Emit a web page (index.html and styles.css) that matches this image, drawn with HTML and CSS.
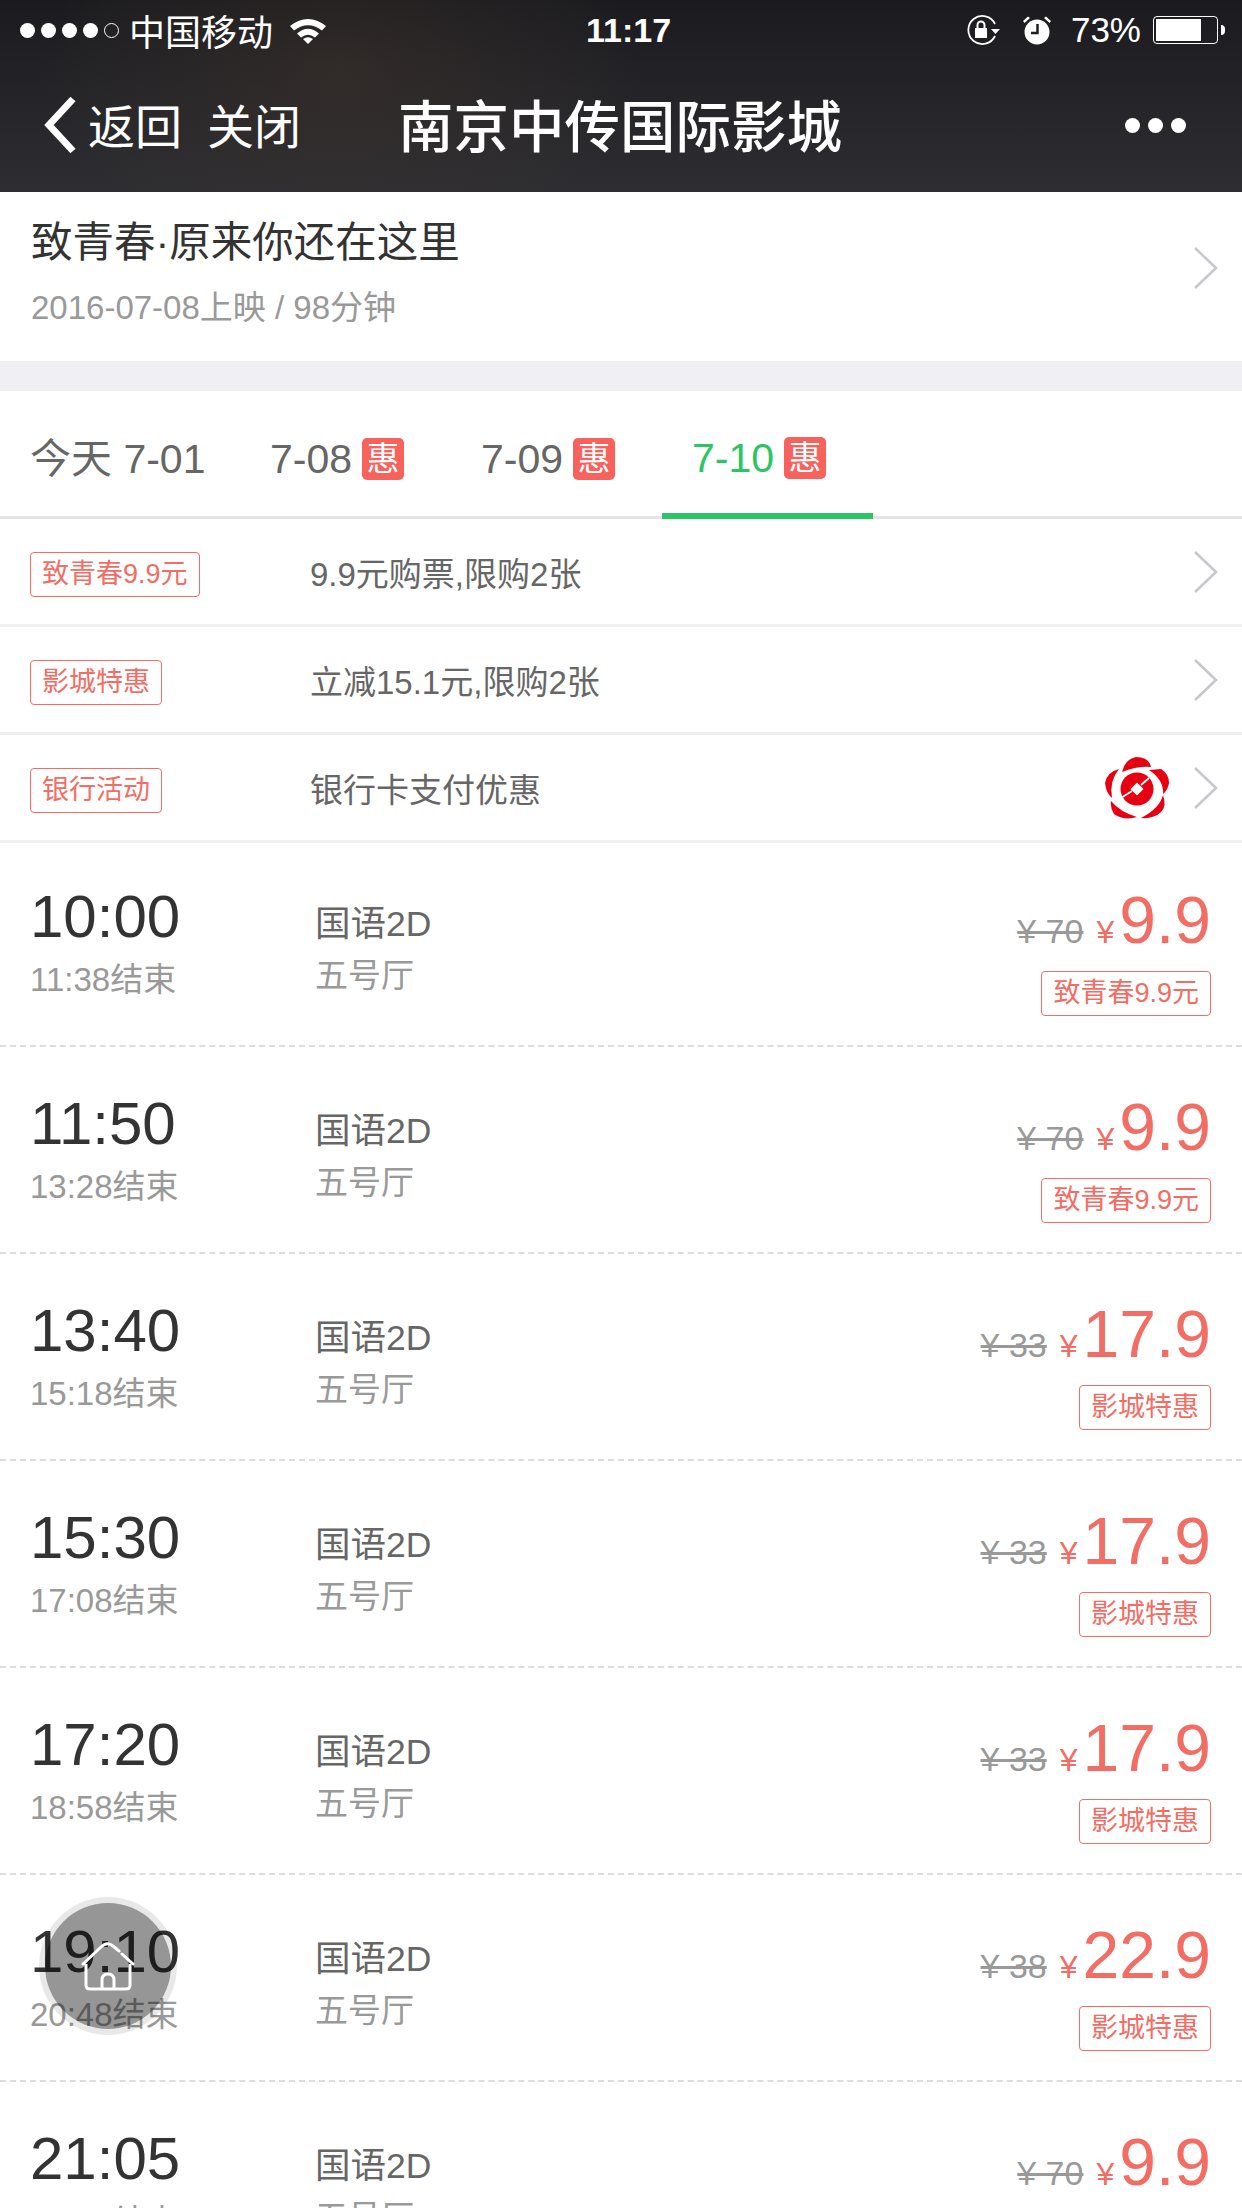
FILE: index.html
```html
<!DOCTYPE html>
<html lang="zh-CN">
<head>
    <meta charset="UTF-8">
    <title>南京中传国际影城</title>
    <link rel="stylesheet" href="styles.css">
</head>
<body>
    <div class="page">
        <header class="top">
            <div class="status">
                <div class="status-left">
                    <span class="dot"></span><span class="dot"></span><span class="dot"></span><span class="dot"></span><span class="dot dot-empty"></span>
                    <span class="carrier">中国移动</span>
                    <svg class="wifi" width="38" height="27" viewBox="0 0 38 27">
                        <path d="M1 9 Q19 -5 37 9 L33 13.500 Q19 3 5 13.500 Z" fill="#fff"/>
                        <path d="M8 16.500 Q19 7 30 16.500 L26 20.500 Q19 15 12 20.500 Z" fill="#fff"/>
                        <path d="M14 22 Q19 18.500 24 22 L19 27 Z" fill="#fff"/>
                    </svg>
                </div>
                <div class="clock">11:17</div>
                <div class="status-right">
                    <svg class="lock" width="36" height="32" viewBox="0 0 36 32">
                        <path d="M29 22 A14 14 0 1 1 29 10" fill="none" stroke="#fff" stroke-width="1.800"/>
                        <path d="M25 15 H34 L29.500 20 Z" fill="#fff"/>
                        <rect x="9" y="14" width="12" height="10" fill="#fff"/>
                        <path d="M11.500 14 V11 A3.500 3.500 0 0 1 18.500 11 V14" fill="none" stroke="#fff" stroke-width="2"/>
                    </svg>
                    <svg class="alarm" width="30" height="30" viewBox="0 0 30 30">
                        <circle cx="15" cy="17" r="12.500" fill="#fff"/>
                        <path d="M1 6 L6 1.500 L8 3 L2.500 8 Z M29 6 L24 1.500 L22 3 L27.500 8 Z" fill="#fff"/>
                        <path d="M15.500 9 V18 H9" fill="none" stroke="#1e1d21" stroke-width="2.500"/>
                    </svg>
                    <span class="percent">73%</span>
                    <div class="battery"><div class="battery-fill"></div></div>
                    <div class="battery-nub"></div>
                </div>
            </div>
            <nav class="nav">
                <svg class="back" width="36" height="60" viewBox="0 0 36 60">
                    <path d="M31 4 L7 30 L31 56" fill="none" stroke="#fff" stroke-width="7"/>
                </svg>
                <span class="nav-link">返回</span>
                <span class="nav-link nav-close">关闭</span>
                <h1 class="nav-title">南京中传国际影城</h1>
                <div class="more"><span></span><span></span><span></span></div>
            </nav>
        </header>

        <section class="movie">
            <div class="movie-text">
                <div class="movie-name">致青春·原来你还在这里</div>
                <div class="movie-sub">2016-07-08上映 / 98分钟</div>
            </div>
            <svg class="chevron movie-chevron" width="25" height="44" viewBox="0 0 25 44"><path d="M2 2 L23 22 L2 42"/></svg>
        </section>
        <div class="gap"></div>

        <div class="tabs">
            <div class="tab">今天 7-01</div>
            <div class="tab">7-08<span class="hui">惠</span></div>
            <div class="tab">7-09<span class="hui">惠</span></div>
            <div class="tab tab-active">7-10<span class="hui">惠</span></div>
        </div>

        <section class="promos">
            <div class="promo">
                <div class="promo-tag"><span class="tag">致青春9.9元</span></div>
                <div class="promo-text">9.9元购票,限购2张</div>
                <svg class="chevron" width="25" height="44" viewBox="0 0 25 44"><path d="M2 2 L23 22 L2 42"/></svg>
            </div>
            <div class="promo">
                <div class="promo-tag"><span class="tag">影城特惠</span></div>
                <div class="promo-text">立减15.1元,限购2张</div>
                <svg class="chevron" width="25" height="44" viewBox="0 0 25 44"><path d="M2 2 L23 22 L2 42"/></svg>
            </div>
            <div class="promo">
                <div class="promo-tag"><span class="tag">银行活动</span></div>
                <div class="promo-text">银行卡支付优惠</div>
                <svg class="bank" width="66" height="63" viewBox="0 0 66 63">
                    <path d="M18 16 Q21 3 32 1 Q45 1 47 11 Q33 10 18 16 Z" fill="#e60012"/>
                    <path d="M45 14 L57 13 Q65 18 65 27 Q64 34 59 38 Q60 24 45 14 Z" fill="#e60012"/>
                    <path d="M59 39 Q63 50 57 56 Q50 63 37 62 Q56 52 59 39 Z" fill="#e60012"/>
                    <path d="M7 45 Q16 56 33 61 Q20 65 10 58 Q6 52 7 45 Z" fill="#e60012"/>
                    <path d="M15 13 Q3 16 1 27 Q2 37 8 42 Q5 25 15 13 Z" fill="#e60012"/>
                    <circle cx="33" cy="33" r="16.500" fill="#e60012"/>
                    <path d="M33 26.500 L39.500 33 L33 39.500 L26.500 33 Z" fill="#fff"/>
                    <path d="M37 29 L45 22 M28 35 L17 42" stroke="#fff" stroke-width="1.800"/>
                </svg>
                <svg class="chevron" width="25" height="44" viewBox="0 0 25 44"><path d="M2 2 L23 22 L2 42"/></svg>
            </div>
        </section>

        <section class="shows">
            <div class="show">
                <div class="show-time"><div class="start">10:00</div><div class="end">11:38结束</div></div>
                <div class="show-info"><div class="lang">国语2D</div><div class="hall">五号厅</div></div>
                <div class="show-price">
                    <div class="prices"><span class="old">¥ 70</span><span class="yen">¥</span><span class="now">9.9</span></div>
                    <span class="tag">致青春9.9元</span>
                </div>
            </div>
            <div class="show">
                <div class="show-time"><div class="start">11:50</div><div class="end">13:28结束</div></div>
                <div class="show-info"><div class="lang">国语2D</div><div class="hall">五号厅</div></div>
                <div class="show-price">
                    <div class="prices"><span class="old">¥ 70</span><span class="yen">¥</span><span class="now">9.9</span></div>
                    <span class="tag">致青春9.9元</span>
                </div>
            </div>
            <div class="show">
                <div class="show-time"><div class="start">13:40</div><div class="end">15:18结束</div></div>
                <div class="show-info"><div class="lang">国语2D</div><div class="hall">五号厅</div></div>
                <div class="show-price">
                    <div class="prices"><span class="old">¥ 33</span><span class="yen">¥</span><span class="now">17.9</span></div>
                    <span class="tag">影城特惠</span>
                </div>
            </div>
            <div class="show">
                <div class="show-time"><div class="start">15:30</div><div class="end">17:08结束</div></div>
                <div class="show-info"><div class="lang">国语2D</div><div class="hall">五号厅</div></div>
                <div class="show-price">
                    <div class="prices"><span class="old">¥ 33</span><span class="yen">¥</span><span class="now">17.9</span></div>
                    <span class="tag">影城特惠</span>
                </div>
            </div>
            <div class="show">
                <div class="show-time"><div class="start">17:20</div><div class="end">18:58结束</div></div>
                <div class="show-info"><div class="lang">国语2D</div><div class="hall">五号厅</div></div>
                <div class="show-price">
                    <div class="prices"><span class="old">¥ 33</span><span class="yen">¥</span><span class="now">17.9</span></div>
                    <span class="tag">影城特惠</span>
                </div>
            </div>
            <div class="show">
                <div class="show-time"><div class="start">19:10</div><div class="end">20:48结束</div></div>
                <div class="show-info"><div class="lang">国语2D</div><div class="hall">五号厅</div></div>
                <div class="show-price">
                    <div class="prices"><span class="old">¥ 38</span><span class="yen">¥</span><span class="now">22.9</span></div>
                    <span class="tag">影城特惠</span>
                </div>
            </div>
            <div class="show">
                <div class="show-time"><div class="start">21:05</div><div class="end">22:43结束</div></div>
                <div class="show-info"><div class="lang">国语2D</div><div class="hall">五号厅</div></div>
                <div class="show-price">
                    <div class="prices"><span class="old">¥ 70</span><span class="yen">¥</span><span class="now">9.9</span></div>
                    <span class="tag">致青春9.9元</span>
                </div>
            </div>
        </section>

        <div class="home">
            <svg width="56" height="54" viewBox="0 0 56 54">
                <path d="M3 25 L21 8 Q27 2 33 7 L39 12 M42 15 L53 25" fill="none" stroke="#fff" stroke-width="3" stroke-linecap="round"/>
                <path d="M6 25 V46 Q6 50 10 50 H46 Q50 50 50 46 V25" fill="none" stroke="#fff" stroke-width="3"/>
                <path d="M22 50 V41 Q22 35 28 35 Q34 35 34 41 V50" fill="none" stroke="#fff" stroke-width="3"/>
            </svg>
        </div>
    </div>
</body>
</html>
```

FILE: styles.css
```css
html, body {
    margin: 0;
    padding: 0;
    background: #fff;
}
body {
    font-family: "Liberation Sans", "Noto Sans CJK SC", sans-serif;
    color: #333;
}
.page {
    position: relative;
    width: 1242px;
    height: 2208px;
    overflow: hidden;
}

/* top bar */
.top {
    height: 192px;
    color: #fff;
    background: radial-gradient(ellipse 300px 190px at 340px 70px, rgba(72, 56, 46, .4), rgba(72, 56, 46, 0)),
        linear-gradient(#1b1b1f, #2e2e32);
}
.status {
    height: 60px;
    display: grid;
    grid-template-columns: 1fr auto 1fr;
    align-items: center;
    padding: 0 17px 0 20px;
}
.status-left, .status-right {
    display: flex;
    align-items: center;
}
.status-right {
    justify-content: flex-end;
}
.dot {
    width: 15px;
    height: 15px;
    border-radius: 50%;
    background: #fff;
    margin-right: 6px;
    box-sizing: border-box;
}
.dot-empty {
    background: none;
    border: 1px solid #fff;
}
.carrier {
    font-size: 36px;
    margin-left: 4px;
}
.wifi {
    margin-left: 16px;
}
.clock {
    font-size: 34px;
    font-weight: bold;
    margin-left: 12px;
}
.lock {
    margin-right: 1px;
}
.alarm {
    margin-left: 19px;
}
.percent {
    font-size: 35px;
    margin-left: 19px;
}
.battery {
    width: 65px;
    height: 28px;
    box-sizing: border-box;
    border: 1.500px solid #fff;
    border-radius: 4px;
    margin-left: 12px;
    padding: 2px;
}
.battery-fill {
    width: 45px;
    height: 100%;
    background: #fff;
}
.battery-nub {
    width: 4px;
    height: 10px;
    margin-left: 3px;
    background: #fff;
    border-radius: 0 5px 5px 0;
}
.nav {
    height: 132px;
    display: flex;
    align-items: center;
    padding-left: 42px;
    box-sizing: border-box;
    padding-bottom: 6px;
}
.back {
    margin-top: 3px;
}
.nav-link {
    font-size: 47px;
    margin-left: 10px;
}
.nav-close {
    margin-left: 25px;
}
.nav-title {
    margin: 0 0 0 97px;
    font-size: 55.500px;
    font-weight: 500;
}
.more {
    margin: 4px 56px 0 auto;
    display: flex;
    gap: 8px;
}
.more span {
    width: 15px;
    height: 15px;
    border-radius: 50%;
    background: #fff;
}

/* movie header */
.movie {
    height: 169px;
    box-sizing: border-box;
    display: flex;
    padding: 22px 24px 0 31px;
    justify-content: space-between;
}
.movie-name {
    font-size: 41.500px;
    line-height: 58px;
    color: #333;
}
.movie-sub {
    font-size: 33px;
    line-height: 40px;
    margin-top: 16px;
    color: #999;
}
.chevron {
    flex: none;
    fill: none;
    stroke: #c7c7cc;
    stroke-width: 2.500;
}
.movie-chevron {
    margin-top: 32px;
}
.gap {
    height: 30px;
    background: #efeff4;
}

/* date tabs */
.tabs {
    height: 128px;
    box-sizing: border-box;
    display: grid;
    grid-template-columns: 240px 211px 211px 211px;
    border-bottom: 3px solid #e5e5e5;
}
.tab {
    font-size: 41px;
    line-height: 48px;
    color: #666;
    padding: 8px 0 0 30px;
    height: 128px;
    box-sizing: border-box;
    display: flex;
    align-items: center;
}
.tab-active {
    color: #2bc566;
    border-bottom: 6px solid #2bc566;
    padding-top: 11px;
}
.hui {
    width: 42px;
    height: 42px;
    margin-left: 10px;
    border-radius: 5px;
    background: #f7625c;
    color: #fff;
    font-size: 33px;
    line-height: 42px;
    text-align: center;
}

/* tags */
.tag {
    display: inline-block;
    box-sizing: border-box;
    height: 45px;
    line-height: 42px;
    padding: 0 11px;
    border: 1.500px solid #f26d64;
    border-radius: 4px;
    color: #f26d64;
    font-size: 27px;
    white-space: nowrap;
}

/* promo rows */
.promo {
    height: 108px;
    box-sizing: border-box;
    display: flex;
    align-items: center;
    padding: 0 24px 0 30px;
    border-bottom: 3px solid #efefef;
}
.promo-tag {
    width: 280px;
    flex: none;
    padding-top: 6px;
}
.promo-text {
    flex: 1;
    font-size: 33px;
    color: #666;
}
.bank {
    margin-right: 23px;
}

/* showtimes */
.show {
    height: 207px;
    box-sizing: border-box;
    display: flex;
    padding: 43px 31px 0 30px;
    border-bottom: 2px dashed #ddd;
}
.show:first-child {
    height: 204px;
    padding-top: 40px;
}
.show-time {
    width: 285px;
    flex: none;
}
.start {
    font-size: 60px;
    line-height: 68px;
    color: #333;
}
.end {
    font-size: 33px;
    line-height: 40px;
    margin-top: 9px;
    color: #999;
}
.show-info {
    flex: 1;
    padding-top: 19px;
}
.lang {
    font-size: 35.500px;
    line-height: 44px;
    color: #666;
}
.hall {
    font-size: 33px;
    line-height: 40px;
    margin-top: 10px;
    color: #999;
}
.show-price {
    text-align: right;
    padding-top: 3px;
}
.prices {
    line-height: 68px;
    height: 68px;
    margin-bottom: 17px;
    white-space: nowrap;
}
.old {
    font-size: 34px;
    color: #999;
    text-decoration: line-through;
}
.yen {
    font-size: 32px;
    color: #f26d64;
    margin-left: 13px;
    margin-right: 5px;
}
.now {
    font-size: 66px;
    color: #f26d64;
}
.show-price .tag {
    display: block;
    width: max-content;
    margin-left: auto;
}

/* floating home button */
.home {
    position: absolute;
    left: 39px;
    top: 1897px;
    width: 138px;
    height: 138px;
    box-sizing: border-box;
    border-radius: 50%;
    background: rgba(0, 0, 0, .41);
    background-clip: padding-box;
    border: 6px solid rgba(0, 0, 0, .09);
    display: flex;
    align-items: center;
    justify-content: center;
}
```
